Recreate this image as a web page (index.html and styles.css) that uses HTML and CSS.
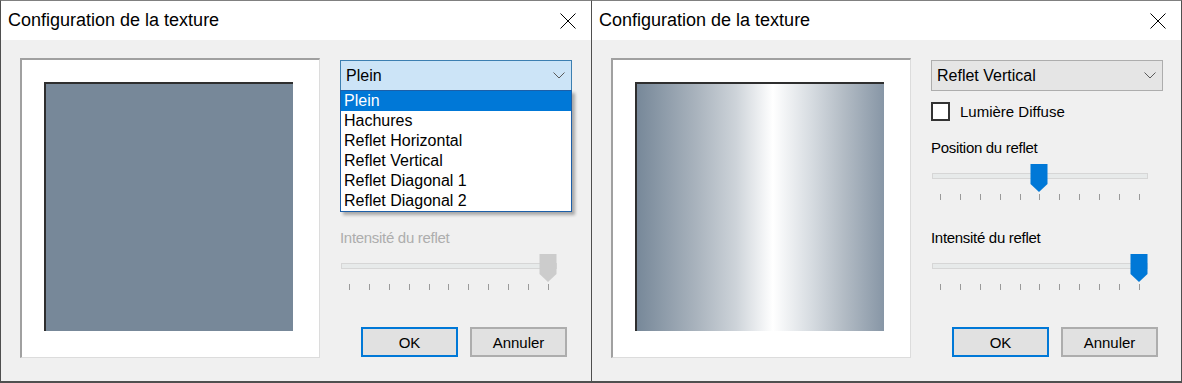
FILE: index.html
```html
<!DOCTYPE html>
<html lang="fr">
<head>
    <meta charset="UTF-8">
    <meta name="viewport" content="width=device-width, initial-scale=1.0">
    <title>Configuration de la texture</title>
    <link rel="stylesheet" href="styles.css">
</head>
<body>
    <div class="screen">
        <!-- dialog with the texture list opened -->
        <div class="dialog">
            <div class="title-bar">
                <span class="title-text">Configuration de la texture</span>
                <svg class="close-icon" width="16" height="16" viewBox="0 0 16 16"><path d="M0.5 0.5L15.5 15.5M15.5 0.5L0.5 15.5" stroke="#000" stroke-width="1" fill="none"/></svg>
            </div>
            <div class="dialog-body">
                <div class="preview-frame">
                    <div class="preview-swatch swatch-solid"></div>
                </div>
                <div class="controls">
                    <div class="combo-wrap">
                        <div class="combo combo-open">
                            <span>Plein</span>
                            <svg class="chevron" width="12" height="7" viewBox="0 0 12 7"><path d="M0.5 0.5L6 6L11.5 0.5" stroke="#5a5a5a" fill="none"/></svg>
                        </div>
                        <ul class="combo-list">
                            <li class="selected">Plein</li>
                            <li>Hachures</li>
                            <li>Reflet Horizontal</li>
                            <li>Reflet Vertical</li>
                            <li>Reflet Diagonal 1</li>
                            <li>Reflet Diagonal 2</li>
                        </ul>
                    </div>
                    <div class="check-row is-hidden">
                        <span class="check-box"></span>
                        <span>Lumière Diffuse</span>
                    </div>
                    <div class="field-label is-hidden">Position du reflet</div>
                    <svg class="trackbar is-hidden" width="216" height="37" viewBox="0 0 216 37">
                        <rect x="0.5" y="9.5" width="215" height="5" fill="#e7eaea" stroke="#d6d6d6"/>
                        <path d="M8.5 30v6M28.5 30v6M48.5 30v6M68.5 30v6M88.5 30v6M107.5 30v6M127.5 30v6M147.5 30v6M167.5 30v6M187.5 30v6M207.5 30v6" stroke="#9a9a9a"/>
                        <path d="M98.5 0H115.5V20L107 28L98.5 20Z" fill="#0078d7"/>
                    </svg>
                    <div class="field-label disabled">Intensité du reflet</div>
                    <svg class="trackbar" width="216" height="37" viewBox="0 0 216 37">
                        <rect x="0.5" y="9.5" width="215" height="5" fill="#e7eaea" stroke="#d6d6d6"/>
                        <path d="M8.5 30v6M28.5 30v6M48.5 30v6M68.5 30v6M88.5 30v6M107.5 30v6M127.5 30v6M147.5 30v6M167.5 30v6M187.5 30v6M207.5 30v6" stroke="#9a9a9a"/>
                        <path d="M198.5 0H215.5V20L207 28L198.5 20Z" fill="#cccccc"/>
                    </svg>
                    <div class="button-row">
                        <button class="btn btn-default">OK</button>
                        <button class="btn">Annuler</button>
                    </div>
                </div>
            </div>
        </div>

        <!-- dialog with the vertical reflection selected -->
        <div class="dialog">
            <div class="title-bar">
                <span class="title-text">Configuration de la texture</span>
                <svg class="close-icon" width="16" height="16" viewBox="0 0 16 16"><path d="M0.5 0.5L15.5 15.5M15.5 0.5L0.5 15.5" stroke="#000" stroke-width="1" fill="none"/></svg>
            </div>
            <div class="dialog-body">
                <div class="preview-frame">
                    <div class="preview-swatch swatch-reflect"></div>
                </div>
                <div class="controls">
                    <div class="combo-wrap">
                        <div class="combo">
                            <span>Reflet Vertical</span>
                            <svg class="chevron" width="12" height="7" viewBox="0 0 12 7"><path d="M0.5 0.5L6 6L11.5 0.5" stroke="#5a5a5a" fill="none"/></svg>
                        </div>
                    </div>
                    <div class="check-row">
                        <span class="check-box"></span>
                        <span>Lumière Diffuse</span>
                    </div>
                    <div class="field-label">Position du reflet</div>
                    <svg class="trackbar" width="216" height="37" viewBox="0 0 216 37">
                        <rect x="0.5" y="9.5" width="215" height="5" fill="#e7eaea" stroke="#d6d6d6"/>
                        <path d="M8.5 30v6M28.5 30v6M48.5 30v6M68.5 30v6M88.5 30v6M107.5 30v6M127.5 30v6M147.5 30v6M167.5 30v6M187.5 30v6M207.5 30v6" stroke="#9a9a9a"/>
                        <path d="M98.5 0H115.5V20L107 28L98.5 20Z" fill="#0078d7"/>
                    </svg>
                    <div class="field-label">Intensité du reflet</div>
                    <svg class="trackbar" width="216" height="37" viewBox="0 0 216 37">
                        <rect x="0.5" y="9.5" width="215" height="5" fill="#e7eaea" stroke="#d6d6d6"/>
                        <path d="M8.5 30v6M28.5 30v6M48.5 30v6M68.5 30v6M88.5 30v6M107.5 30v6M127.5 30v6M147.5 30v6M167.5 30v6M187.5 30v6M207.5 30v6" stroke="#9a9a9a"/>
                        <path d="M198.5 0H215.5V20L207 28L198.5 20Z" fill="#0078d7"/>
                    </svg>
                    <div class="button-row">
                        <button class="btn btn-default">OK</button>
                        <button class="btn">Annuler</button>
                    </div>
                </div>
            </div>
        </div>
    </div>
</body>
</html>
```

FILE: styles.css
```css
body {
    margin: 0;
    padding: 0;
    font-family: "Liberation Sans", Arial, sans-serif;
    font-size: 15px;
    color: #000;
    background-color: #f0f0f0;
}

.screen {
    display: flex;
    width: 1182px;
    height: 383px;
}

.dialog {
    width: 591px;
    box-sizing: border-box;
    display: flex;
    flex-direction: column;
    border-top: 1px solid #808080;
    border-left: 1px solid #4f4f4f;
    border-bottom: 2px solid #4f4f4f;
    background-color: #f0f0f0;
}

.dialog + .dialog {
    border-right: 1px solid #4f4f4f;
}

.title-bar {
    height: 39px;
    flex-shrink: 0;
    display: flex;
    align-items: center;
    justify-content: space-between;
    padding: 0 15px 0 7px;
    background-color: #fff;
}

.title-text {
    font-size: 18px;
}

.close-icon {
    display: block;
}

.dialog-body {
    flex: 1;
    display: flex;
    gap: 20px;
    padding: 18px 0 0 19px;
}

.preview-frame {
    width: 300px;
    height: 300px;
    box-sizing: border-box;
    padding: 22px 0 0 22px;
    background-color: #fff;
    border-top: 2px solid #a0a0a0;
    border-left: 2px solid #a0a0a0;
    border-right: 1px solid #dcdcdc;
    border-bottom: 1px solid #dcdcdc;
}

.preview-swatch {
    width: 249px;
    height: 249px;
    box-sizing: border-box;
    border-top: 2px solid #2e2e2e;
    border-left: 2px solid #2e2e2e;
}

.swatch-solid {
    background-color: #778899;
}

.swatch-reflect {
    background: linear-gradient(to right, #778899 0%, #a9b3bd 24%, #cdd3d9 40%, #ffffff 55%, #d8dde2 70%, #b2bbc4 84%, #8796a6 100%);
}

.controls {
    width: 232px;
    display: flex;
    flex-direction: column;
}

.combo-wrap {
    position: relative;
    margin-top: 2px;
    font-size: 16px;
}

.combo {
    height: 31px;
    box-sizing: border-box;
    display: flex;
    align-items: center;
    justify-content: space-between;
    padding: 0 6px 0 5px;
    border: 1px solid #adadad;
    background-color: #e5e5e5;
}

.combo-open {
    background-color: #cce4f7;
    border-color: #3c7fb1;
}

.chevron {
    display: block;
}

.combo-list {
    position: absolute;
    top: 30px;
    left: 0;
    z-index: 2;
    width: 100%;
    box-sizing: border-box;
    margin: 0;
    padding: 0;
    list-style: none;
    background-color: #fff;
    border: 1px solid #1d5fa8;
    box-shadow: 3px 3px 3px rgba(0, 0, 0, 0.3);
}

.combo-list li {
    height: 20px;
    line-height: 20px;
    padding-left: 3px;
}

.combo-list li.selected {
    background-color: #0078d7;
    color: #fff;
}

.check-row {
    display: flex;
    align-items: center;
    gap: 10px;
    height: 20px;
    margin-top: 10px;
}

.check-box {
    width: 19px;
    height: 19px;
    box-sizing: border-box;
    border: 2px solid #333;
    background-color: #fff;
}

.field-label {
    height: 20px;
    line-height: 20px;
    margin-top: 17px;
    letter-spacing: -0.3px;
}

.trackbar + .field-label {
    margin-top: 27px;
}

.field-label.disabled {
    color: #adadad;
}

.trackbar {
    display: block;
    margin: 6px 0 0 1px;
}

.button-row {
    display: flex;
    gap: 12px;
    margin-top: 36px;
    padding-left: 21px;
}

.btn {
    width: 97px;
    height: 30px;
    box-sizing: border-box;
    padding: 0;
    font-family: inherit;
    font-size: 15px;
    color: #000;
    background-color: #e1e1e1;
    border: 2px solid #adadad;
}

.btn-default {
    border-color: #0078d7;
}

.is-hidden {
    visibility: hidden;
}
```
